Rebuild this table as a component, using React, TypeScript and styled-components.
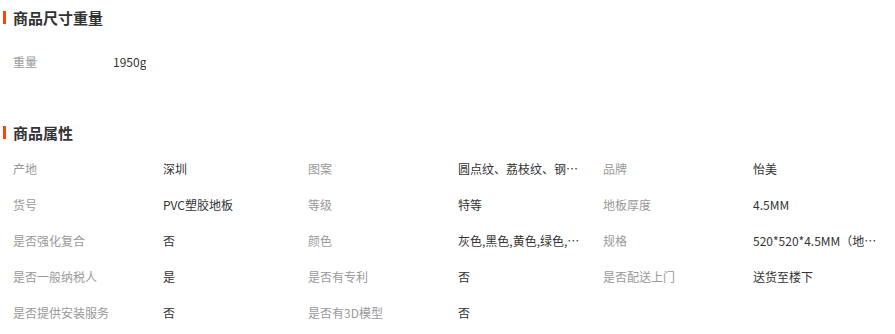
import React from 'react';
import styled, { createGlobalStyle } from 'styled-components';

const GlobalStyle = createGlobalStyle`
  body {
    margin: 0;
    background: #fff;
    font-family: "Microsoft YaHei", "Noto Sans CJK SC", "Liberation Sans", sans-serif;
    font-size: 12px;
    color: #333;
  }
`;

const Page = styled.div`
  width: 895px;
  padding-top: 8px;
`;

const Section = styled.section<{ $gap: number }>`
  & + & {
    margin-top: ${(p) => p.$gap}px;
  }
`;

const Title = styled.h3`
  position: relative;
  margin: 0;
  padding-left: 13px;
  height: 20px;
  line-height: 20px;
  font-size: 15px;
  font-weight: bold;
  color: #333;

  &::before {
    content: '';
    position: absolute;
    left: 3px;
    top: 3px;
    width: 3px;
    height: 13px;
    background: #ff4400;
  }
`;

const Grid = styled.div<{ $cols: number; $top: number }>`
  display: grid;
  grid-template-columns: repeat(${(p) => p.$cols}, 295px);
  margin-top: ${(p) => p.$top}px;
  padding-left: 13px;
`;

const Cell = styled.div<{ $labelWidth: number }>`
  display: flex;
  align-items: center;
  height: 36px;

  & > dt {
    flex: 0 0 ${(p) => p.$labelWidth}px;
  }
`;

const Label = styled.dt`
  margin: 0;
  color: #999;
  white-space: nowrap;
`;

const Value = styled.dd`
  margin: 0;
  max-width: 128px;
  color: #333;
  white-space: nowrap;
  overflow: hidden;
  text-overflow: ellipsis;
`;

const attrs: [string, string][] = [
  ['产地', '深圳'],
  ['图案', '圆点纹、荔枝纹、钢板纹、木纹'],
  ['品牌', '怡美'],
  ['货号', 'PVC塑胶地板'],
  ['等级', '特等'],
  ['地板厚度', '4.5MM'],
  ['是否强化复合', '否'],
  ['颜色', '灰色,黑色,黄色,绿色,红色'],
  ['规格', '520*520*4.5MM（地板砖）'],
  ['是否一般纳税人', '是'],
  ['是否有专利', '否'],
  ['是否配送上门', '送货至楼下'],
  ['是否提供安装服务', '否'],
  ['是否有3D模型', '否'],
];

export default function App() {
  return (
    <Page>
      <GlobalStyle />
      <Section $gap={0}>
        <Title>商品尺寸重量</Title>
        <Grid $cols={1} $top={15}>
          <Cell $labelWidth={100}>
            <Label>重量</Label>
            <Value>1950g</Value>
          </Cell>
        </Grid>
      </Section>
      <Section $gap={44}>
        <Title>商品属性</Title>
        <Grid $cols={3} $top={7}>
          {attrs.map(([k, v]) => (
            <Cell key={k} $labelWidth={150}>
              <Label>{k}</Label>
              <Value>{v}</Value>
            </Cell>
          ))}
        </Grid>
      </Section>
    </Page>
  );
}
